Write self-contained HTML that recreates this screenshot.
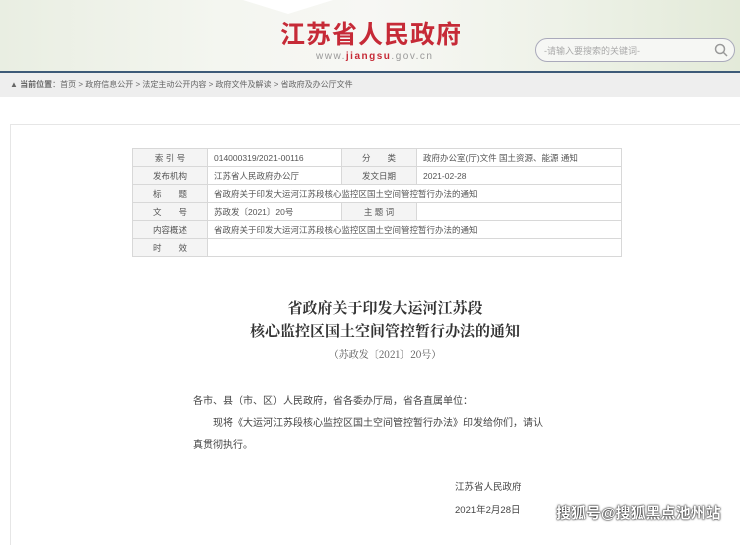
<!DOCTYPE html>
<html><head><meta charset="utf-8"><style>
body{margin:0;width:740px;height:528px;overflow:hidden;background:#fff;font-family:"Liberation Sans","Noto Sans CJK SC",sans-serif;position:relative}
.hdr{position:absolute;left:0;top:0;width:740px;height:71px;background:linear-gradient(90deg,#e9eee2,#f4f6f0 30%,#f7f7f4 50%,#eef2e8 75%,#e3ead9);border-bottom:2px solid #3d5a78}
.tri{position:absolute;left:243px;top:0;width:0;height:0;border-left:45px solid transparent;border-right:45px solid transparent;border-top:14px solid #fff}
.logo{position:absolute;left:280px;top:15px;font-size:25px;font-weight:bold;color:#c62a37;letter-spacing:1px;font-family:"Noto Sans CJK SC",sans-serif}
.url{position:absolute;left:316px;top:51px;font-size:10px;color:#999;letter-spacing:1.5px}
.url b{color:#c62a37}
.search{position:absolute;left:535px;top:38px;width:198px;height:22px;border:1px solid #aab;border-radius:12px;background:#f6f7f4}
.search span{position:absolute;left:8px;top:5px;font-size:9px;color:#aaa}
.bc{position:absolute;left:0;top:73px;width:740px;height:24px;background:#eeeeee;font-size:8px;color:#666;line-height:24px;padding-left:10px;box-sizing:border-box}
.panel{position:absolute;left:10px;top:124px;width:740px;height:420px;border-top:1px solid #e6e6e6;border-left:1px solid #e6e6e6}
table{position:absolute;left:132px;top:148px;border-collapse:collapse;font-size:8.5px;color:#555}
td{border:1px solid #d8d8d8;height:17px;padding:0 6px}
td.l{background:#f4f4f4;text-align:center;width:62px}
.t{position:absolute;left:0;width:770px;text-align:center;font-family:"Noto Serif CJK SC",serif;font-weight:bold;font-size:15px;color:#333}
.p{position:absolute;font-size:10px;color:#444}
.wm{position:absolute;left:556px;top:502px;font-size:15px;font-weight:bold;color:#fff;text-shadow:0 0 2px #000,0 0 1px #000}
</style></head><body>
<div class="hdr"><div class="tri"></div><div class="logo">江苏省人民政府</div><div class="url">www.<b>jiangsu</b>.gov.cn</div>
<div class="search"><span>-请输入要搜索的关键词-</span><svg style="position:absolute;right:6px;top:4px" width="14" height="14"><circle cx="6" cy="6" r="4.5" fill="none" stroke="#999" stroke-width="1.5"/><line x1="9" y1="9" x2="13" y2="13" stroke="#999" stroke-width="1.5"/></svg></div></div>
<div class="bc">▲ <b>当前位置</b>：首页 &gt; 政府信息公开 &gt; 法定主动公开内容 &gt; 政府文件及解读 &gt; 省政府及办公厅文件</div>
<div class="panel"></div>
<table>
<tr><td class="l">索 引 号</td><td style="width:121px">014000319/2021-00116</td><td class="l">分　　类</td><td style="width:192px">政府办公室(厅)文件 国土资源、能源 通知</td></tr>
<tr><td class="l">发布机构</td><td>江苏省人民政府办公厅</td><td class="l">发文日期</td><td>2021-02-28</td></tr>
<tr><td class="l">标　　题</td><td colspan="3">省政府关于印发大运河江苏段核心监控区国土空间管控暂行办法的通知</td></tr>
<tr><td class="l">文　　号</td><td>苏政发〔2021〕20号</td><td class="l">主 题 词</td><td></td></tr>
<tr><td class="l">内容概述</td><td colspan="3">省政府关于印发大运河江苏段核心监控区国土空间管控暂行办法的通知</td></tr>
<tr><td class="l">时　　效</td><td colspan="3"></td></tr>
</table>
<div class="t" style="top:297px">省政府关于印发大运河江苏段</div>
<div class="t" style="top:320px">核心监控区国土空间管控暂行办法的通知</div>
<div class="t" style="top:346px;font-size:10px;font-weight:normal;color:#555">（苏政发〔2021〕20号）</div>
<div class="p" style="left:193px;top:392px">各市、县（市、区）人民政府，省各委办厅局，省各直属单位：</div>
<div class="p" style="left:213px;top:414px">现将《大运河江苏段核心监控区国土空间管控暂行办法》印发给你们，请认</div>
<div class="p" style="left:193px;top:436px">真贯彻执行。</div>
<div class="p" style="left:455px;top:479px;font-size:9.5px">江苏省人民政府</div>
<div class="p" style="left:455px;top:502px;font-size:9.5px">2021年2月28日</div>
<div class="wm">搜狐号@搜狐黑点池州站</div>
</body></html>
